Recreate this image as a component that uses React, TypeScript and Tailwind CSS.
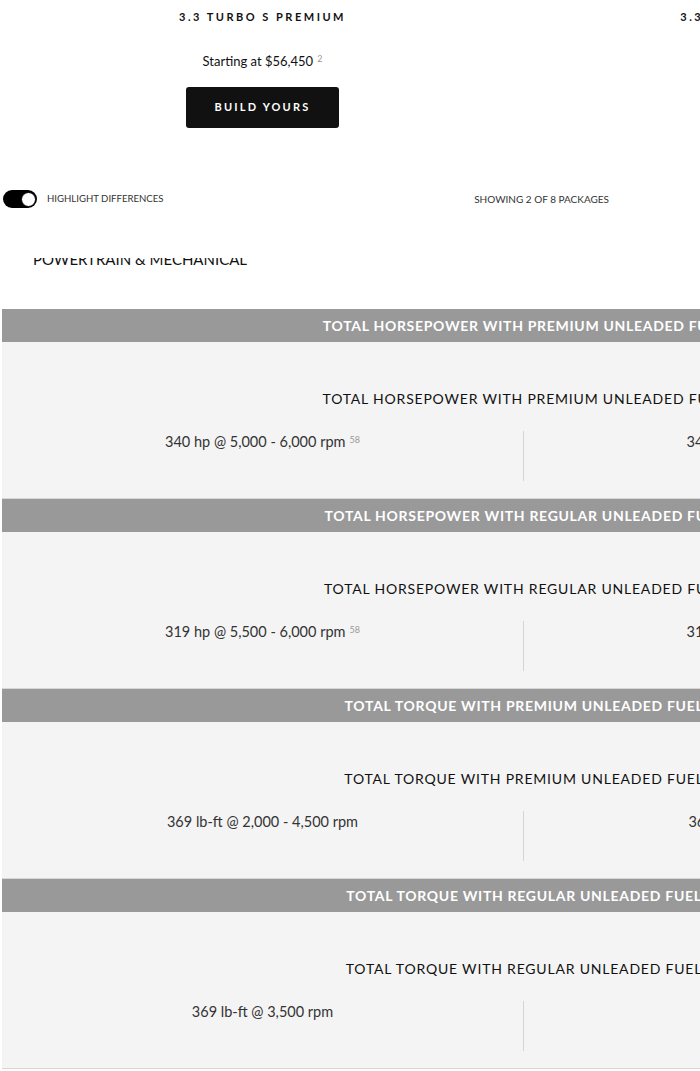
import React from "react";

const F = { fontFamily: "Lato, 'Liberation Sans', sans-serif" };

type Row = { title: string; values: [string, string]; sup?: string };

const rows: Row[] = [
  { title: "TOTAL HORSEPOWER WITH PREMIUM UNLEADED FUEL", values: ["340 hp @ 5,000 - 6,000 rpm", "340 hp @ 5,000 - 6,000 rpm"], sup: "58" },
  { title: "TOTAL HORSEPOWER WITH REGULAR UNLEADED FUEL", values: ["319 hp @ 5,500 - 6,000 rpm", "319 hp @ 5,500 - 6,000 rpm"], sup: "58" },
  { title: "TOTAL TORQUE WITH PREMIUM UNLEADED FUEL", values: ["369 lb-ft @ 2,000 - 4,500 rpm", "369 lb-ft @ 2,000 - 4,500 rpm"] },
  { title: "TOTAL TORQUE WITH REGULAR UNLEADED FUEL", values: ["369 lb-ft @ 3,500 rpm", "369 lb-ft @ 3,500 rpm"] },
];

function Model({ name }: { name: string }) {
  return (
    <div className="flex flex-col items-center">
      <div className="text-[11px] leading-[16px] font-bold tracking-[2.5px] text-[#111] whitespace-nowrap">{name}</div>
      <div className="mt-[27px] text-[13px] leading-[18px] text-[#111] whitespace-nowrap">
        Starting at $56,450
        <sup className="ml-[4px] text-[9px] text-[#999]">2</sup>
      </div>
      <button className="mt-[17px] h-[41px] w-[153px] rounded-[3px] bg-[#111] text-white text-[11px] font-bold tracking-[2.2px]">
        BUILD YOURS
      </button>
    </div>
  );
}

function Section({ row }: { row: Row }) {
  return (
    <div>
      <div className="h-[33px] bg-[#999999] flex items-center justify-center">
        <span className="text-white text-[14px] font-bold tracking-[0.7px] whitespace-nowrap">{row.title}</span>
      </div>
      <div className="bg-[#f4f4f4] border-b border-[#d6d6d6] pt-[48px] pb-[17px]">
        <div className="h-[18px] flex items-center justify-center text-[14px] leading-[18px] tracking-[0.8px] text-[#111] whitespace-nowrap">
          {row.title}
        </div>
        <div className="mt-[23px] grid grid-cols-[521px_521px] h-[50px]">
          {row.values.map((v, i) => (
            <div key={i} className={`flex justify-center ${i === 1 ? "border-l border-[#d4d4d4]" : ""}`}>
              <span className="text-[14.5px] leading-[22px] text-[#333] whitespace-nowrap">
                {v}
                {row.sup && <sup className="ml-[4px] text-[9px] text-[#999]">{row.sup}</sup>}
              </span>
            </div>
          ))}
        </div>
      </div>
    </div>
  );
}

export default function App() {
  return (
    <div className="w-[700px] h-[1071px] overflow-hidden bg-white" style={F}>
      <div className="w-[1044px] ml-[2px] pt-[9px]">
        <div className="grid grid-cols-[521px_521px]">
          <Model name="3.3 TURBO S PREMIUM" />
          <Model name="3.3 TURBO S PREMIUM AWD" />
        </div>
      </div>

      <div className="mt-[62px] w-[700px] pl-[3px] pr-[91px] flex items-center justify-between">
        <div className="flex items-center gap-[10px]">
          <div className="w-[34px] h-[18px] rounded-full bg-black flex items-center justify-end pr-[1px]">
            <div className="w-[15px] h-[15px] rounded-full bg-white border border-black" />
          </div>
          <span className="text-[9.6px] text-[#333] whitespace-nowrap">HIGHLIGHT DIFFERENCES</span>
        </div>
        <span className="text-[10px] text-[#333] whitespace-nowrap">SHOWING 2 OF 8 PACKAGES</span>
      </div>

      <div className="mt-[50px] h-[9px] overflow-hidden pl-[33px]">
        <div className="-mt-[8px] text-[15px] leading-[18px] text-[#111] whitespace-nowrap">POWERTRAIN &amp; MECHANICAL</div>
      </div>

      <div className="mt-[42px] w-[1044px] ml-[2px]">
        {rows.map((r, i) => (
          <Section key={i} row={r} />
        ))}
      </div>
    </div>
  );
}
